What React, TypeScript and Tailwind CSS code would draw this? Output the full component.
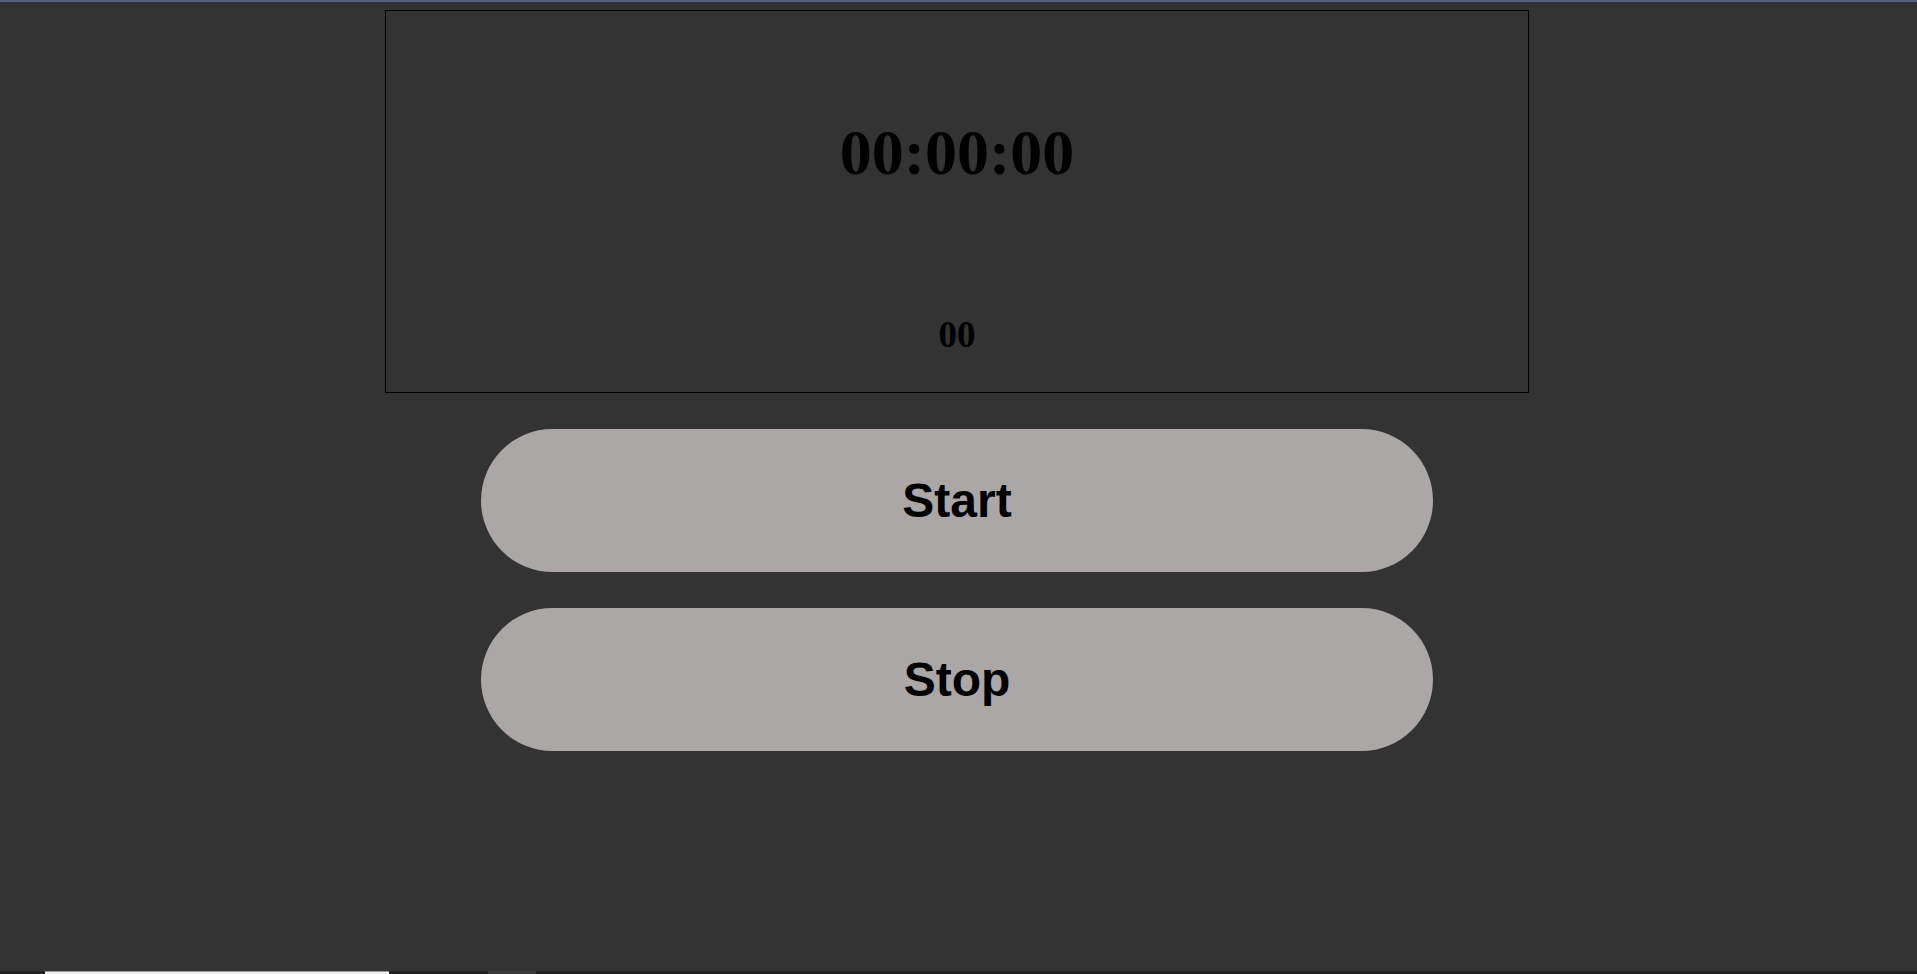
import React, { useState, useRef, useEffect } from "react";

function pad(n: number) {
  return n.toString().padStart(2, "0");
}

export default function App() {
  const [ms, setMs] = useState<number>(0);
  const timer = useRef<number | null>(null);

  const start = () => {
    if (timer.current) return;
    timer.current = window.setInterval(() => setMs((m) => m + 10), 10);
  };

  const stop = () => {
    if (timer.current) {
      clearInterval(timer.current);
      timer.current = null;
    }
  };

  useEffect(() => stop, []);

  const total = Math.floor(ms / 1000);
  const hh = pad(Math.floor(total / 3600));
  const mm = pad(Math.floor((total % 3600) / 60));
  const ss = pad(total % 60);
  const cs = pad(Math.floor((ms % 1000) / 10));

  return (
    <div className="min-h-[974px] bg-[#333333] flex flex-col">
      <div className="h-[2px] bg-[#56607e]" />

      <div className="flex-1 flex flex-col items-center pr-[3px]">
        {/* display */}
        <div className="mt-2 w-[1144px] h-[383px] border border-black flex flex-col items-center font-['Liberation_Serif',serif] font-bold text-black">
          <div className="mt-[110px] text-[64px] leading-none">
            {hh}:{mm}:{ss}
          </div>
          <div className="mt-[131px] text-[37px] leading-none">{cs}</div>
        </div>

        {/* buttons */}
        <div className="mt-9 flex flex-col gap-9 font-['Liberation_Sans',sans-serif]">
          <button
            onClick={start}
            className="w-[952px] h-[143px] rounded-full bg-[#aba7a6] text-black text-[48px] font-bold cursor-pointer"
          >
            Start
          </button>
          <button
            onClick={stop}
            className="w-[952px] h-[143px] rounded-full bg-[#aba7a6] text-black text-[48px] font-bold cursor-pointer"
          >
            Stop
          </button>
        </div>
      </div>

      {/* taskbar edge */}
      <div className="h-[3px] bg-[#1f2123] flex">
        <div className="ml-[45px] w-[344px] bg-[#f0f0f0] border-t border-[#9a9a9a]" />
        <div className="ml-[99px] w-[48px] bg-[#3c3c3c]" />
      </div>
    </div>
  );
}
